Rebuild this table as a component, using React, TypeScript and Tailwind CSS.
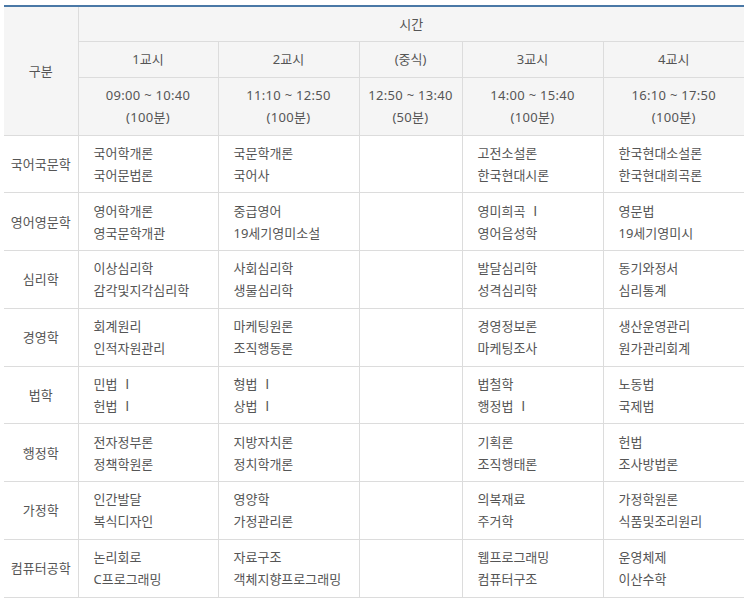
import React from "react"

interface MajorRow {
  name: string
  p1: string[]
  p2: string[]
  p3: string[]
  p4: string[]
}

const periods = [
  { label: "1교시", time: "09:00 ~ 10:40", length: "(100분)" },
  { label: "2교시", time: "11:10 ~ 12:50", length: "(100분)" },
  { label: "(중식)", time: "12:50 ~ 13:40", length: "(50분)" },
  { label: "3교시", time: "14:00 ~ 15:40", length: "(100분)" },
  { label: "4교시", time: "16:10 ~ 17:50", length: "(100분)" },
]

const rows: MajorRow[] = [
  { name: "국어국문학", p1: ["국어학개론", "국어문법론"], p2: ["국문학개론", "국어사"], p3: ["고전소설론", "한국현대시론"], p4: ["한국현대소설론", "한국현대희곡론"] },
  { name: "영어영문학", p1: ["영어학개론", "영국문학개관"], p2: ["중급영어", "19세기영미소설"], p3: ["영미희곡 Ⅰ", "영어음성학"], p4: ["영문법", "19세기영미시"] },
  { name: "심리학", p1: ["이상심리학", "감각및지각심리학"], p2: ["사회심리학", "생물심리학"], p3: ["발달심리학", "성격심리학"], p4: ["동기와정서", "심리통계"] },
  { name: "경영학", p1: ["회계원리", "인적자원관리"], p2: ["마케팅원론", "조직행동론"], p3: ["경영정보론", "마케팅조사"], p4: ["생산운영관리", "원가관리회계"] },
  { name: "법학", p1: ["민법 Ⅰ", "헌법 Ⅰ"], p2: ["형법 Ⅰ", "상법 Ⅰ"], p3: ["법철학", "행정법 Ⅰ"], p4: ["노동법", "국제법"] },
  { name: "행정학", p1: ["전자정부론", "정책학원론"], p2: ["지방자치론", "정치학개론"], p3: ["기획론", "조직행태론"], p4: ["헌법", "조사방법론"] },
  { name: "가정학", p1: ["인간발달", "복식디자인"], p2: ["영양학", "가정관리론"], p3: ["의복재료", "주거학"], p4: ["가정학원론", "식품및조리원리"] },
  { name: "컴퓨터공학", p1: ["논리회로", "C프로그래밍"], p2: ["자료구조", "객체지향프로그래밍"], p3: ["웹프로그래밍", "컴퓨터구조"], p4: ["운영체제", "이산수학"] },
]

const SubjectCell = ({ items }: { items: string[] }) => (
  <td className="border-b border-l border-[#dcdcdc] pl-[15px] align-middle">
    {items.map((s) => (
      <div key={s}>{s}</div>
    ))}
  </td>
)

export default function App() {
  return (
    <div className="bg-white px-[4px] pt-[5px] font-['Noto_Sans','Noto_Sans_CJK_KR',sans-serif] text-[13px] leading-[22px] text-[#555]">
      <table className="w-[740px] table-fixed border-collapse border-t-2 border-[#4a78a6]">
        <colgroup>
          <col className="w-[74px]" />
          <col className="w-[140px]" />
          <col className="w-[141px]" />
          <col className="w-[103px]" />
          <col className="w-[141px]" />
          <col className="w-[141px]" />
        </colgroup>
        <thead className="bg-[#f5f5f5]">
          <tr className="h-[35px]">
            <th rowSpan={3} className="border-b border-[#dcdcdc] text-center font-normal">
              구분
            </th>
            <th colSpan={5} className="border-b border-l border-[#dcdcdc] text-center font-normal">
              시간
            </th>
          </tr>
          <tr className="h-[36px]">
            {periods.map((p) => (
              <th key={p.label} className="border-b border-l border-[#dcdcdc] text-center font-normal">
                {p.label}
              </th>
            ))}
          </tr>
          <tr className="h-[58px]">
            {periods.map((p) => (
              <th key={p.label} className="border-b border-l border-[#dcdcdc] text-center font-normal tracking-[0.3px]">
                <div>{p.time}</div>
                <div>{p.length}</div>
              </th>
            ))}
          </tr>
        </thead>
        <tbody>
          {rows.map((r) => (
            <tr key={r.name} className="h-[57.75px]">
              <td className="border-b border-[#dcdcdc] text-center">{r.name}</td>
              <SubjectCell items={r.p1} />
              <SubjectCell items={r.p2} />
              <td className="border-b border-l border-[#dcdcdc]" />
              <SubjectCell items={r.p3} />
              <SubjectCell items={r.p4} />
            </tr>
          ))}
        </tbody>
      </table>
    </div>
  )
}
